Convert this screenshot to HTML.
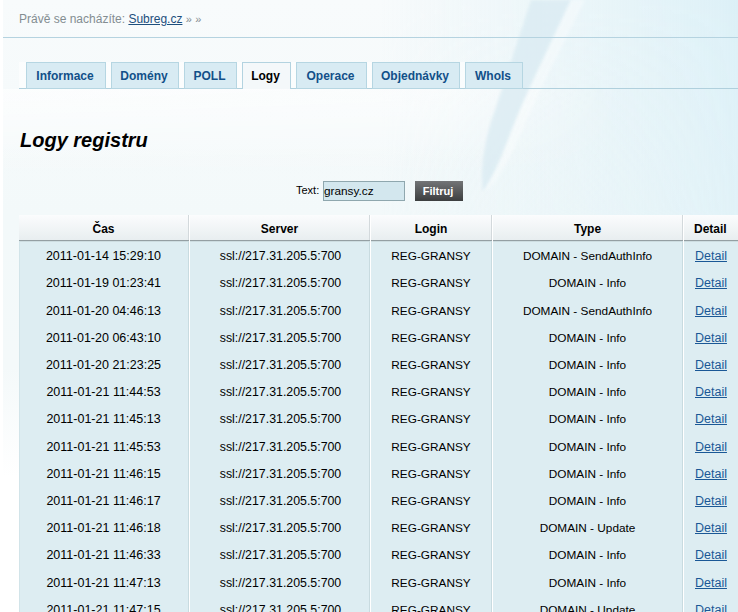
<!DOCTYPE html>
<html><head><meta charset="utf-8">
<style>
*{margin:0;padding:0;box-sizing:border-box}
html,body{width:738px;height:612px;overflow:hidden;background:#fff}
body{font-family:"Liberation Sans",sans-serif;font-size:12px;color:#000;position:relative}
#bg{position:absolute;left:0;top:0;width:738px;height:612px}
.abs{position:absolute;white-space:nowrap}
#crumb{left:19px;top:12px;color:#838d91;font-size:12px;line-height:14px}
#crumb a{color:#1d4f7d;text-decoration:underline}
#crumb .r{font-size:11px;color:#838d91}
#hline{left:3px;top:37px;width:735px;height:1px;background:#b5d3e0}
#tabline{left:19px;top:88px;width:719px;height:1px;background:#b0d0dd}
.tab{position:absolute;top:62px;height:27px;border:1px solid #b6d6e2;background:#d8ebf3;color:#125089;font-weight:bold;font-size:12px;line-height:27px;text-align:center;padding-right:2px}
.tab.act{background:#f4f8fa;color:#000;border-bottom:none;height:27px;line-height:27px;border-color:#b3d3e0}
h1{position:absolute;left:20px;top:128px;font-size:20px;font-style:italic;font-weight:bold;line-height:24px;white-space:nowrap}
#lbl{left:296px;top:183px;font-size:11px;line-height:14px}
#inp{left:323px;top:181px;width:82px;height:20px;border:1px solid #8fa7ae;background:#d3e7ee;font-size:11.8px;line-height:18px;padding-left:0px}
#btn{left:415px;top:181px;width:48px;height:20px;background:linear-gradient(#737577,#3c3e3f);color:#fff;font-weight:bold;font-size:11px;line-height:20px;text-align:center;padding-right:2px}
#thead{left:19px;top:215px;width:719px;height:26px;background:linear-gradient(#fbfcfd,#e8eef0);border-bottom:1px solid #949fa3}
#tbody{left:19px;top:241px;width:719px;height:371px;background:#ddedf2;border-left:1px solid #d2e4e9;border-top:1px solid #cddde1}
.vs{position:absolute;width:1px;background:#c8dbe0}
.vw{position:absolute;width:1px;background:#fff}
.th{position:absolute;top:217px;height:25px;line-height:25px;font-weight:bold;font-size:12px;text-align:center;white-space:nowrap}
.c{position:absolute;font-size:12.5px;line-height:14px;text-align:center;white-space:nowrap}
.c a{color:#1a5896;text-decoration:underline}
</style></head><body>
<svg id="bg" width="738" height="612" viewBox="0 0 738 612">
<defs>
<linearGradient id="g1" x1="0" y1="0" x2="0" y2="612" gradientUnits="userSpaceOnUse">
<stop offset="0" stop-color="#f8fbfc"/>
<stop offset="0.35" stop-color="#f3f9fa"/>
<stop offset="0.6" stop-color="#f4f9fa"/>
<stop offset="0.78" stop-color="#ffffff"/>
<stop offset="1" stop-color="#ffffff"/>
</linearGradient>
<linearGradient id="g2" x1="380" y1="0" x2="738" y2="0" gradientUnits="userSpaceOnUse">
<stop offset="0" stop-color="#e2f2f7" stop-opacity="0"/>
<stop offset="0.5" stop-color="#e2f2f7" stop-opacity="0.55"/>
<stop offset="1" stop-color="#dcf0f7" stop-opacity="1"/>
</linearGradient>
<linearGradient id="g3" x1="0" y1="0" x2="0" y2="300" gradientUnits="userSpaceOnUse">
<stop offset="0" stop-color="#fff" stop-opacity="1"/>
<stop offset="0.7" stop-color="#fff" stop-opacity="0.8"/>
<stop offset="1" stop-color="#fff" stop-opacity="0.3"/>
</linearGradient>
<linearGradient id="g4" x1="0" y1="89" x2="0" y2="179" gradientUnits="userSpaceOnUse"><stop offset="0" stop-color="#fff" stop-opacity="0.7"/><stop offset="1" stop-color="#fff" stop-opacity="0"/></linearGradient>
<linearGradient id="g5" x1="3" y1="0" x2="738" y2="0" gradientUnits="userSpaceOnUse"><stop offset="0" stop-color="#fff" stop-opacity="1"/><stop offset="0.6" stop-color="#fff" stop-opacity="0.8"/><stop offset="0.85" stop-color="#fff" stop-opacity="0"/></linearGradient>
<mask id="m2"><rect x="0" y="0" width="738" height="300" fill="url(#g5)"/></mask>
<mask id="m1"><rect x="0" y="0" width="738" height="300" fill="url(#g3)"/></mask>
<filter id="bl" x="-20%" y="-20%" width="140%" height="140%"><feGaussianBlur stdDeviation="1.5"/></filter>
</defs>
<rect x="3" y="0" width="735" height="612" fill="url(#g1)"/>
<rect x="380" y="0" width="358" height="300" fill="url(#g2)" mask="url(#m1)"/>
<rect x="3" y="89" width="735" height="90" fill="url(#g4)" mask="url(#m2)"/>
<path d="M531 0 L571 0 C548 50 525 95 510 135 C496 170 488 185 483 192 C480 170 484 140 495 110 C505 80 518 40 531 0 Z" fill="#d8eaf2" opacity="0.7" filter="url(#bl)"/>
<path d="M571 0 L585 0 C560 50 535 100 518 140 C505 170 492 188 483 192 C492 180 502 160 510 135 C525 95 548 50 571 0 Z" fill="#ffffff" opacity="0.35" filter="url(#bl)"/>
</svg>
<div class="abs" id="crumb">Právě se nacházíte: <a>Subreg.cz</a> <span class="r">»</span> <span class="r">»</span></div>
<div class="abs" id="hline"></div><div class="abs" style="left:19px;top:62px;width:504px;height:26px;background:rgba(255,255,255,0.6)"></div><div class="abs" id="tabline"></div>
<div class="tab" style="left:26px;width:80px">Informace</div>
<div class="tab" style="left:111px;width:68px">Domény</div>
<div class="tab" style="left:184px;width:53px">POLL</div>
<div class="tab act" style="left:242px;width:49px">Logy</div>
<div class="tab" style="left:296px;width:71px">Operace</div>
<div class="tab" style="left:372px;width:88px">Objednávky</div>
<div class="tab" style="left:465px;width:58px">WhoIs</div>
<h1>Logy registru</h1>
<div class="abs" id="lbl">Text:</div><div class="abs" id="inp">gransy.cz</div><div class="abs" id="btn">Filtruj</div>
<div class="abs" id="thead"></div><div class="abs" id="tbody"></div>
<div class="vs" style="left:188px;top:215px;height:25px;background:#d3d9dc"></div>
<div class="vw" style="left:189px;top:215px;height:397px"></div>
<div class="vs" style="left:188px;top:241px;height:371px"></div>
<div class="vs" style="left:369px;top:215px;height:25px;background:#d3d9dc"></div>
<div class="vw" style="left:370px;top:215px;height:397px"></div>
<div class="vs" style="left:369px;top:241px;height:371px"></div>
<div class="vs" style="left:491px;top:215px;height:25px;background:#d3d9dc"></div>
<div class="vw" style="left:492px;top:215px;height:397px"></div>
<div class="vs" style="left:491px;top:241px;height:371px"></div>
<div class="vs" style="left:682px;top:215px;height:25px;background:#d3d9dc"></div>
<div class="vw" style="left:683px;top:215px;height:397px"></div>
<div class="vs" style="left:682px;top:241px;height:371px"></div>
<div class="th" style="left:19px;width:169px">Čas</div>
<div class="th" style="left:190px;width:179px">Server</div>
<div class="th" style="left:371px;width:120px">Login</div>
<div class="th" style="left:493px;width:189px">Type</div>
<div class="th" style="left:694px;text-align:left">Detail</div>
<div class="c" style="top:249px;left:19px;width:169px;font-size:12.5px">2011-01-14 15:29:10</div>
<div class="c" style="top:249px;left:191px;width:179px;font-size:12.35px">ssl://217.31.205.5:700</div>
<div class="c" style="top:249px;left:371px;width:120px;font-size:11.8px">REG-GRANSY</div>
<div class="c" style="top:249px;left:493px;width:189px;font-size:11.8px">DOMAIN - SendAuthInfo</div>
<div class="c" style="top:249px;left:695px;text-align:left"><a>Detail</a></div>
<div class="c" style="top:276px;left:19px;width:169px;font-size:12.5px">2011-01-19 01:23:41</div>
<div class="c" style="top:276px;left:191px;width:179px;font-size:12.35px">ssl://217.31.205.5:700</div>
<div class="c" style="top:276px;left:371px;width:120px;font-size:11.8px">REG-GRANSY</div>
<div class="c" style="top:276px;left:493px;width:189px;font-size:11.8px">DOMAIN - Info</div>
<div class="c" style="top:276px;left:695px;text-align:left"><a>Detail</a></div>
<div class="c" style="top:304px;left:19px;width:169px;font-size:12.5px">2011-01-20 04:46:13</div>
<div class="c" style="top:304px;left:191px;width:179px;font-size:12.35px">ssl://217.31.205.5:700</div>
<div class="c" style="top:304px;left:371px;width:120px;font-size:11.8px">REG-GRANSY</div>
<div class="c" style="top:304px;left:493px;width:189px;font-size:11.8px">DOMAIN - SendAuthInfo</div>
<div class="c" style="top:304px;left:695px;text-align:left"><a>Detail</a></div>
<div class="c" style="top:331px;left:19px;width:169px;font-size:12.5px">2011-01-20 06:43:10</div>
<div class="c" style="top:331px;left:191px;width:179px;font-size:12.35px">ssl://217.31.205.5:700</div>
<div class="c" style="top:331px;left:371px;width:120px;font-size:11.8px">REG-GRANSY</div>
<div class="c" style="top:331px;left:493px;width:189px;font-size:11.8px">DOMAIN - Info</div>
<div class="c" style="top:331px;left:695px;text-align:left"><a>Detail</a></div>
<div class="c" style="top:358px;left:19px;width:169px;font-size:12.5px">2011-01-20 21:23:25</div>
<div class="c" style="top:358px;left:191px;width:179px;font-size:12.35px">ssl://217.31.205.5:700</div>
<div class="c" style="top:358px;left:371px;width:120px;font-size:11.8px">REG-GRANSY</div>
<div class="c" style="top:358px;left:493px;width:189px;font-size:11.8px">DOMAIN - Info</div>
<div class="c" style="top:358px;left:695px;text-align:left"><a>Detail</a></div>
<div class="c" style="top:385px;left:19px;width:169px;font-size:12.5px">2011-01-21 11:44:53</div>
<div class="c" style="top:385px;left:191px;width:179px;font-size:12.35px">ssl://217.31.205.5:700</div>
<div class="c" style="top:385px;left:371px;width:120px;font-size:11.8px">REG-GRANSY</div>
<div class="c" style="top:385px;left:493px;width:189px;font-size:11.8px">DOMAIN - Info</div>
<div class="c" style="top:385px;left:695px;text-align:left"><a>Detail</a></div>
<div class="c" style="top:412px;left:19px;width:169px;font-size:12.5px">2011-01-21 11:45:13</div>
<div class="c" style="top:412px;left:191px;width:179px;font-size:12.35px">ssl://217.31.205.5:700</div>
<div class="c" style="top:412px;left:371px;width:120px;font-size:11.8px">REG-GRANSY</div>
<div class="c" style="top:412px;left:493px;width:189px;font-size:11.8px">DOMAIN - Info</div>
<div class="c" style="top:412px;left:695px;text-align:left"><a>Detail</a></div>
<div class="c" style="top:440px;left:19px;width:169px;font-size:12.5px">2011-01-21 11:45:53</div>
<div class="c" style="top:440px;left:191px;width:179px;font-size:12.35px">ssl://217.31.205.5:700</div>
<div class="c" style="top:440px;left:371px;width:120px;font-size:11.8px">REG-GRANSY</div>
<div class="c" style="top:440px;left:493px;width:189px;font-size:11.8px">DOMAIN - Info</div>
<div class="c" style="top:440px;left:695px;text-align:left"><a>Detail</a></div>
<div class="c" style="top:467px;left:19px;width:169px;font-size:12.5px">2011-01-21 11:46:15</div>
<div class="c" style="top:467px;left:191px;width:179px;font-size:12.35px">ssl://217.31.205.5:700</div>
<div class="c" style="top:467px;left:371px;width:120px;font-size:11.8px">REG-GRANSY</div>
<div class="c" style="top:467px;left:493px;width:189px;font-size:11.8px">DOMAIN - Info</div>
<div class="c" style="top:467px;left:695px;text-align:left"><a>Detail</a></div>
<div class="c" style="top:494px;left:19px;width:169px;font-size:12.5px">2011-01-21 11:46:17</div>
<div class="c" style="top:494px;left:191px;width:179px;font-size:12.35px">ssl://217.31.205.5:700</div>
<div class="c" style="top:494px;left:371px;width:120px;font-size:11.8px">REG-GRANSY</div>
<div class="c" style="top:494px;left:493px;width:189px;font-size:11.8px">DOMAIN - Info</div>
<div class="c" style="top:494px;left:695px;text-align:left"><a>Detail</a></div>
<div class="c" style="top:521px;left:19px;width:169px;font-size:12.5px">2011-01-21 11:46:18</div>
<div class="c" style="top:521px;left:191px;width:179px;font-size:12.35px">ssl://217.31.205.5:700</div>
<div class="c" style="top:521px;left:371px;width:120px;font-size:11.8px">REG-GRANSY</div>
<div class="c" style="top:521px;left:493px;width:189px;font-size:11.8px">DOMAIN - Update</div>
<div class="c" style="top:521px;left:695px;text-align:left"><a>Detail</a></div>
<div class="c" style="top:548px;left:19px;width:169px;font-size:12.5px">2011-01-21 11:46:33</div>
<div class="c" style="top:548px;left:191px;width:179px;font-size:12.35px">ssl://217.31.205.5:700</div>
<div class="c" style="top:548px;left:371px;width:120px;font-size:11.8px">REG-GRANSY</div>
<div class="c" style="top:548px;left:493px;width:189px;font-size:11.8px">DOMAIN - Info</div>
<div class="c" style="top:548px;left:695px;text-align:left"><a>Detail</a></div>
<div class="c" style="top:576px;left:19px;width:169px;font-size:12.5px">2011-01-21 11:47:13</div>
<div class="c" style="top:576px;left:191px;width:179px;font-size:12.35px">ssl://217.31.205.5:700</div>
<div class="c" style="top:576px;left:371px;width:120px;font-size:11.8px">REG-GRANSY</div>
<div class="c" style="top:576px;left:493px;width:189px;font-size:11.8px">DOMAIN - Info</div>
<div class="c" style="top:576px;left:695px;text-align:left"><a>Detail</a></div>
<div class="c" style="top:603px;left:19px;width:169px;font-size:12.5px">2011-01-21 11:47:15</div>
<div class="c" style="top:603px;left:191px;width:179px;font-size:12.35px">ssl://217.31.205.5:700</div>
<div class="c" style="top:603px;left:371px;width:120px;font-size:11.8px">REG-GRANSY</div>
<div class="c" style="top:603px;left:493px;width:189px;font-size:11.8px">DOMAIN - Update</div>
<div class="c" style="top:603px;left:695px;text-align:left"><a>Detail</a></div>
</body></html>
